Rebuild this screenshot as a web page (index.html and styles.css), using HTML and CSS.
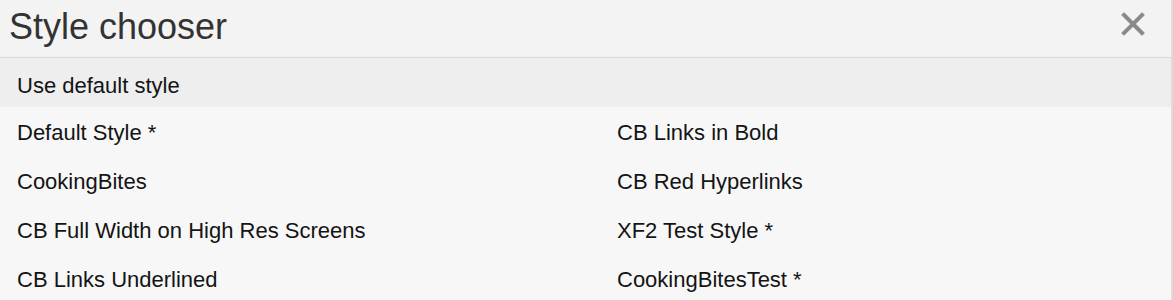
FILE: index.html
```html
<!DOCTYPE html>
<html lang="en">
<head>
  <meta charset="UTF-8" />
  <title>Style chooser</title>
  <link rel="stylesheet" href="styles.css">
</head>
<body>
  <div class="overlay">
    <div class="overlay-title">
      <h2>Style chooser</h2>
      <a class="overlay-close" href="#" title="Close">
        <svg width="24" height="24" viewBox="0 0 24 24">
          <path d="M3 3 L21 21 M21 3 L3 21" stroke="#8a8a8a" stroke-width="4" stroke-linecap="square" fill="none"/>
        </svg>
      </a>
    </div>
    <div class="overlay-content">
      <a class="menu-row menu-row--default" href="#">Use default style</a>
      <ul class="style-list">
        <li><a href="#">Default Style *</a></li>
        <li><a href="#">CB Links in Bold</a></li>
        <li><a href="#">CookingBites</a></li>
        <li><a href="#">CB Red Hyperlinks</a></li>
        <li><a href="#">CB Full Width on High Res Screens</a></li>
        <li><a href="#">XF2 Test Style *</a></li>
        <li><a href="#">CB Links Underlined</a></li>
        <li><a href="#">CookingBitesTest *</a></li>
      </ul>
    </div>
  </div>
</body>
</html>
```

FILE: styles.css
```css
body {
  margin: 0;
  padding: 0;
  font-family: "Liberation Sans", Arial, sans-serif;
  background: #f7f7f7;
  color: #141414;
}
.overlay {
  width: 1171px;
  border-right: 2px solid #dcdcdc;
  background: #f7f7f7;
  height: 300px;
  overflow: hidden;
}
.overlay-title {
  display: flex;
  align-items: center;
  justify-content: space-between;
  height: 57px;
  background: #f3f3f3;
  border-bottom: 1px solid #d8d8d8;
  padding: 0 26px 0 9px;
}
.overlay-title h2 {
  margin: 0;
  font-weight: normal;
  font-size: 36px;
  color: #333;
  margin-top: -4px;
}
.overlay-close {
  display: flex;
  margin-top: -10px;
}
.menu-row {
  display: block;
}
.overlay-content a {
  color: #141414;
  text-decoration: none;
  font-size: 22px;
}
.menu-row--default {
  background: #eeeeee;
  height: 46px;
  line-height: 49px;
  padding-top: 3px;
  padding-left: 17px;
}
.style-list {
  list-style: none;
  margin: 0;
  padding: 1px 0 0;
  display: grid;
  grid-template-columns: 600px 1fr;
}
.style-list li a {
  display: block;
  height: 49px;
  line-height: 50px;
  padding-left: 17px;
}
```
